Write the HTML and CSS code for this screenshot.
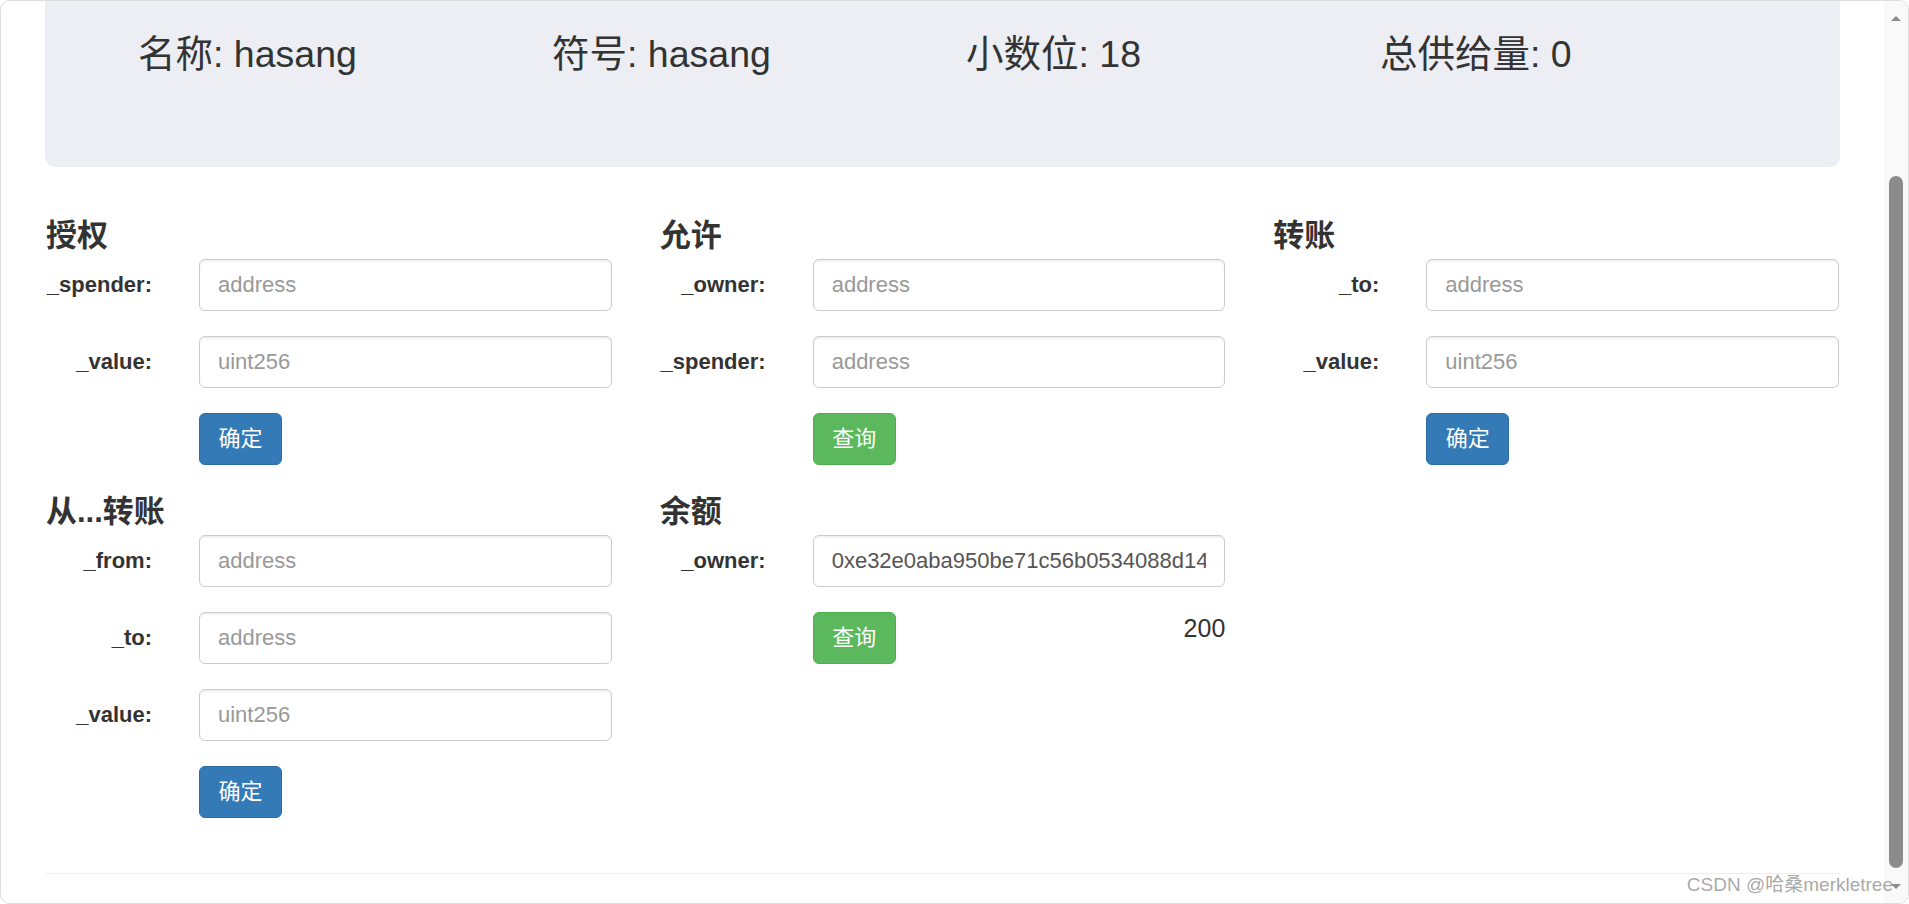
FILE: index.html
```html
<!DOCTYPE html>
<html lang="zh-CN">
<head>
<meta charset="utf-8">
<title>Token</title>
<link rel="stylesheet" href="styles.css">
</head>
<body>
<div class="window">
  <div class="page">
    <div class="jumbotron">
      <div class="stat">名称: hasang</div>
      <div class="stat">符号: hasang</div>
      <div class="stat">小数位: 18</div>
      <div class="stat">总供给量: 0</div>
    </div>

    <div class="forms">
      <section class="panel">
        <h3 class="panel-title">授权</h3>
        <div class="field"><label class="field-label">_spender:</label><input class="form-control" placeholder="address"></div>
        <div class="field"><label class="field-label">_value:</label><input class="form-control" placeholder="uint256"></div>
        <div class="actions"><button class="btn btn-primary">确定</button></div>
      </section>

      <section class="panel">
        <h3 class="panel-title">允许</h3>
        <div class="field"><label class="field-label">_owner:</label><input class="form-control" placeholder="address"></div>
        <div class="field"><label class="field-label">_spender:</label><input class="form-control" placeholder="address"></div>
        <div class="actions"><button class="btn btn-success">查询</button></div>
      </section>

      <section class="panel">
        <h3 class="panel-title">转账</h3>
        <div class="field"><label class="field-label">_to:</label><input class="form-control" placeholder="address"></div>
        <div class="field"><label class="field-label">_value:</label><input class="form-control" placeholder="uint256"></div>
        <div class="actions"><button class="btn btn-primary">确定</button></div>
      </section>

      <section class="panel">
        <h3 class="panel-title">从...转账</h3>
        <div class="field"><label class="field-label">_from:</label><input class="form-control" placeholder="address"></div>
        <div class="field"><label class="field-label">_to:</label><input class="form-control" placeholder="address"></div>
        <div class="field"><label class="field-label">_value:</label><input class="form-control" placeholder="uint256"></div>
        <div class="actions"><button class="btn btn-primary">确定</button></div>
      </section>

      <section class="panel">
        <h3 class="panel-title">余额</h3>
        <div class="field"><label class="field-label">_owner:</label><input class="form-control" value="0xe32e0aba950be71c56b0534088d14a3c7f2b9e61"></div>
        <div class="actions"><button class="btn btn-success">查询</button><span class="result">200</span></div>
      </section>
    </div>

    <hr class="divider">
  </div>

  <div class="scrollbar">
    <span class="arrow arrow-up"></span>
    <span class="thumb"></span>
    <span class="arrow arrow-down"></span>
  </div>
  <div class="watermark">CSDN @哈桑merkletree</div>
</div>
</body>
</html>
```

FILE: styles.css
```css
* { box-sizing: border-box; }

html, body {
  margin: 0;
  padding: 0;
  width: 1909px;
  height: 904px;
  overflow: hidden;
  background: #ffffff;
}

body {
  font-family: "Liberation Sans", Arial, "Noto Sans CJK SC", sans-serif;
  color: #333333;
}

.window {
  position: relative;
  width: 1909px;
  height: 904px;
  border: 1px solid #dedede;
  border-radius: 10px;
  overflow: hidden;
  background: #ffffff;
}

.page {
  padding: 0 68px 0 44px;
}

/* header box */
.jumbotron {
  display: flex;
  height: 166px;
  padding: 32px 0 0 93px;
  background: #eceef3;
  border-radius: 0 0 10px 10px;
}

.stat {
  flex: none;
  width: 414px;
  font-size: 37.5px;
  line-height: 42px;
  color: #333333;
}

/* forms */
.forms {
  display: grid;
  grid-template-columns: repeat(3, 1fr);
  column-gap: 48px;
  row-gap: 27px;
  margin-top: 49px;
  padding: 0 1px 0 1px;
}

.panel-title {
  margin: 0 0 3px;
  font-size: 31px;
  line-height: 40px;
  font-weight: bold;
  color: #333333;
}

.field {
  display: grid;
  grid-template-columns: 106px 1fr;
  column-gap: 47px;
  align-items: center;
  margin-bottom: 25px;
}

.field-label {
  text-align: right;
  font-size: 22px;
  font-weight: bold;
  line-height: 30px;
  color: #333333;
  white-space: nowrap;
}

.form-control {
  display: block;
  width: 100%;
  height: 52px;
  padding: 0 18px;
  font-family: "Liberation Sans", Arial, "Noto Sans CJK SC", sans-serif;
  font-size: 22px;
  color: #555555;
  background: #ffffff;
  border: 1px solid #cccccc;
  border-radius: 6px;
  box-shadow: inset 0 1.5px 1.5px rgba(0, 0, 0, 0.075);
  outline: none;
}

.form-control::placeholder {
  color: #999999;
  opacity: 1;
}

.actions {
  display: flex;
  justify-content: space-between;
  align-items: flex-start;
  padding-left: 153px;
}

.btn {
  height: 52px;
  padding: 0 18.5px;
  font-family: "Liberation Sans", Arial, "Noto Sans CJK SC", sans-serif;
  font-size: 22px;
  line-height: 50px;
  color: #ffffff;
  border: 1px solid transparent;
  border-radius: 6px;
  cursor: pointer;
}

.btn-primary {
  background: #337ab7;
  border-color: #2e6da4;
}

.btn-success {
  background: #5cb85c;
  border-color: #4cae4c;
}

.result {
  margin-top: 1px;
  font-size: 25px;
  line-height: 30px;
  color: #333333;
}

.divider {
  margin: 55px 0 0 1px;
  border: 0;
  border-top: 1px solid #eeeeee;
}

/* window scrollbar */
.scrollbar {
  position: absolute;
  top: 0;
  right: 0;
  bottom: 0;
  width: 24px;
  background: #f9f9f9;
}

.thumb {
  position: absolute;
  left: 5px;
  top: 175px;
  width: 14px;
  height: 692px;
  border-radius: 7px;
  background: #8b8b8b;
}

.arrow {
  position: absolute;
  left: 7px;
  width: 0;
  height: 0;
  border-left: 5px solid transparent;
  border-right: 5px solid transparent;
}

.arrow-up {
  top: 15px;
  border-bottom: 5px solid #8b8b8b;
}

.arrow-down {
  bottom: 14px;
  border-top: 5px solid #8b8b8b;
}

.watermark {
  position: absolute;
  top: 873px;
  right: 15px;
  font-family: "Liberation Sans", Arial, "Noto Sans CJK SC", sans-serif;
  font-size: 19px;
  line-height: 22px;
  color: rgba(130, 130, 130, 0.7);
  white-space: nowrap;
}
```
